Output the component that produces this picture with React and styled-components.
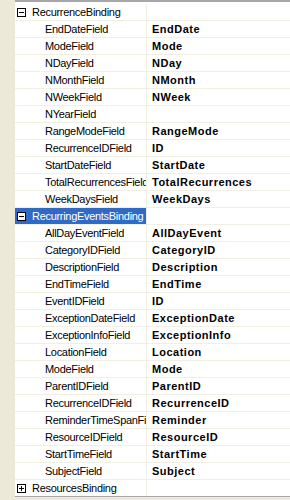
import React from "react";
import styled, { createGlobalStyle } from "styled-components";

const GlobalStyle = createGlobalStyle`
  html, body {
    margin: 0;
    padding: 0;
    background: #ece9d8;
  }
  body {
    font-family: Tahoma, "Liberation Sans", Arial, sans-serif;
    font-size: 11px;
  }
`;

const Frame = styled.div`
  width: 290px;
  height: 500px;
  background: #ece9d8;
  overflow: hidden;
`;

const Grid = styled.div`
  margin-left: 15px;
  background: #fff;
  border-top: 2px solid #a7a6aa;
  padding-top: 2px;
  border-bottom: 1px solid #a7a6aa;
`;

const Row = styled.div`
  display: grid;
  grid-template-columns: 132px 1fr;
  height: 16px;
  border-bottom: 1px solid #f1efe2;

  &:last-child {
    border-bottom: none;
  }
`;

const NameCell = styled.div`
  display: flex;
  align-items: center;
  height: 16px;
  padding-left: ${(p) => (p.$category ? "2px" : "30px")};
  border-right: 1px solid #f1efe2;
  white-space: nowrap;
  overflow: hidden;
  letter-spacing: -0.3px;
  color: ${(p) => (p.$selected ? "#fff" : "#000")};
  background: ${(p) => (p.$selected ? "#316ac5" : "#fff")};
`;

const ValueCell = styled.div`
  display: flex;
  align-items: center;
  padding-left: 5px;
  font-weight: bold;
  letter-spacing: 0.5px;
  color: #000;
  white-space: nowrap;
  overflow: hidden;
`;

const Toggle = styled.span`
  box-sizing: border-box;
  flex: none;
  width: 9px;
  height: 9px;
  margin-right: 6px;
  border: 1px solid #000;
  background: #fff;
  position: relative;

  &::before,
  &::after {
    content: "";
    position: absolute;
    background: #000;
  }
  &::before {
    left: 1px;
    top: 3px;
    width: 5px;
    height: 1px;
  }
  &::after {
    display: ${(p) => (p.$open ? "none" : "block")};
    left: 3px;
    top: 1px;
    width: 1px;
    height: 5px;
  }
`;

const groups = [
  {
    name: "RecurrenceBinding",
    open: true,
    fields: [
      ["EndDateField", "EndDate"],
      ["ModeField", "Mode"],
      ["NDayField", "NDay"],
      ["NMonthField", "NMonth"],
      ["NWeekField", "NWeek"],
      ["NYearField", ""],
      ["RangeModeField", "RangeMode"],
      ["RecurrenceIDField", "ID"],
      ["StartDateField", "StartDate"],
      ["TotalRecurrencesField", "TotalRecurrences"],
      ["WeekDaysField", "WeekDays"],
    ],
  },
  {
    name: "RecurringEventsBinding",
    open: true,
    selected: true,
    fields: [
      ["AllDayEventField", "AllDayEvent"],
      ["CategoryIDField", "CategoryID"],
      ["DescriptionField", "Description"],
      ["EndTimeField", "EndTime"],
      ["EventIDField", "ID"],
      ["ExceptionDateField", "ExceptionDate"],
      ["ExceptionInfoField", "ExceptionInfo"],
      ["LocationField", "Location"],
      ["ModeField", "Mode"],
      ["ParentIDField", "ParentID"],
      ["RecurrenceIDField", "RecurrenceID"],
      ["ReminderTimeSpanField", "Reminder"],
      ["ResourceIDField", "ResourceID"],
      ["StartTimeField", "StartTime"],
      ["SubjectField", "Subject"],
    ],
  },
  { name: "ResourcesBinding", open: false, fields: [] },
];

export default function App() {
  return (
    <Frame>
      <GlobalStyle />
      <Grid>
        {groups.map((g) => (
          <React.Fragment key={g.name}>
            <Row>
              <NameCell $category $selected={g.selected}>
                <Toggle $open={g.open} />
                {g.name}
              </NameCell>
              <ValueCell />
            </Row>
            {g.fields.map(([name, value]) => (
              <Row key={g.name + name}>
                <NameCell>{name}</NameCell>
                <ValueCell>{value}</ValueCell>
              </Row>
            ))}
          </React.Fragment>
        ))}
      </Grid>
    </Frame>
  );
}
